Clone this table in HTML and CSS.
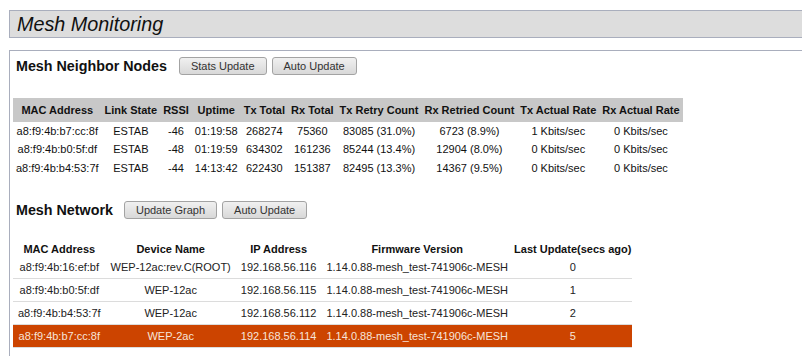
FILE: index.html
```html
<!DOCTYPE html>
<html>
<head>
<meta charset="utf-8">
<link rel="stylesheet" href="styles.css">
</head>
<body>
<div class="titlebar"><h1 class="title">Mesh Monitoring</h1></div>
<div class="panel">
  <div class="section-head">
    <h3 class="section-title">Mesh Neighbor Nodes</h3>
    <div class="btns">
      <button class="btn">Stats Update</button>
      <button class="btn">Auto Update</button>
    </div>
  </div>
  <table class="neighbors">
    <thead>
      <tr><th>MAC Address</th><th>Link State</th><th>RSSI</th><th>Uptime</th><th>Tx Total</th><th>Rx Total</th><th>Tx Retry Count</th><th>Rx Retried Count</th><th>Tx Actual Rate</th><th>Rx Actual Rate</th></tr>
    </thead>
    <tbody>
      <tr><td>a8:f9:4b:b7:cc:8f</td><td>ESTAB</td><td>-46</td><td>01:19:58</td><td>268274</td><td>75360</td><td>83085 (31.0%)</td><td>6723 (8.9%)</td><td>1 Kbits/sec</td><td>0 Kbits/sec</td></tr>
      <tr><td>a8:f9:4b:b0:5f:df</td><td>ESTAB</td><td>-48</td><td>01:19:59</td><td>634302</td><td>161236</td><td>85244 (13.4%)</td><td>12904 (8.0%)</td><td>0 Kbits/sec</td><td>0 Kbits/sec</td></tr>
      <tr><td>a8:f9:4b:b4:53:7f</td><td>ESTAB</td><td>-44</td><td>14:13:42</td><td>622430</td><td>151387</td><td>82495 (13.3%)</td><td>14367 (9.5%)</td><td>0 Kbits/sec</td><td>0 Kbits/sec</td></tr>
    </tbody>
  </table>
  <div class="section-head second">
    <h3 class="section-title">Mesh Network</h3>
    <div class="btns">
      <button class="btn">Update Graph</button>
      <button class="btn">Auto Update</button>
    </div>
  </div>
  <table class="network">
    <thead>
      <tr><th>MAC Address</th><th>Device Name</th><th>IP Address</th><th>Firmware Version</th><th>Last Update(secs ago)</th></tr>
    </thead>
    <tbody>
      <tr><td>a8:f9:4b:16:ef:bf</td><td>WEP-12ac:rev.C(ROOT)</td><td>192.168.56.116</td><td>1.14.0.88-mesh_test-741906c-MESH</td><td>0</td></tr>
      <tr><td>a8:f9:4b:b0:5f:df</td><td>WEP-12ac</td><td>192.168.56.115</td><td>1.14.0.88-mesh_test-741906c-MESH</td><td>1</td></tr>
      <tr><td>a8:f9:4b:b4:53:7f</td><td>WEP-12ac</td><td>192.168.56.112</td><td>1.14.0.88-mesh_test-741906c-MESH</td><td>2</td></tr>
      <tr class="selected"><td>a8:f9:4b:b7:cc:8f</td><td>WEP-2ac</td><td>192.168.56.114</td><td>1.14.0.88-mesh_test-741906c-MESH</td><td>5</td></tr>
    </tbody>
  </table>
</div>
</body>
</html>
```

FILE: styles.css
```css
html { overflow: hidden; background: #fff; }
body {
  margin: 0;
  padding: 10px 0 0 9px;
  font-family: "Liberation Sans", Arial, sans-serif;
  font-size: 11px;
  color: #111;
}
.titlebar {
  margin-right: -30px;
  height: 26px;
  background: #dddddd;
  border: 1px solid #a9aebd;
  display: flex;
  align-items: center;
  padding-left: 7px;
}
.title {
  margin: 0;
  font-size: 19.8px;
  font-style: italic;
  font-weight: normal;
  color: #111;
  line-height: 24px;
}
.panel {
  margin-top: 12px;
  margin-right: -30px;
  border-top: 1px solid #a9aebd;
  border-left: 1px solid #a9aebd;
  padding-bottom: 20px;
}
.section-head {
  display: flex;
  align-items: center;
  padding: 6px 0 0 6px;
}
.section-head.second { padding-top: 0; margin-top: 24px; }
.section-title {
  margin: 0;
  font-size: 14.3px;
  font-weight: bold;
  color: #111;
  line-height: 18px;
}
.btns { display: flex; gap: 5px; margin-left: 12px; }
.section-head.second .btns { margin-left: 11px; }
.btn {
  height: 18px;
  padding: 0 11px;
  font-family: "Liberation Sans", Arial, sans-serif;
  font-size: 11px;
  color: #333;
  background: linear-gradient(#f0f0f0, #d8d8d8);
  border: 1px solid #a3a3a3;
  border-radius: 3px;
  line-height: 16px;
}
table { border-collapse: collapse; border-spacing: 0; margin-left: 3px; }
.neighbors { margin-top: 23px; }
.neighbors th {
  background: #c8c8c8;
  font-weight: bold;
  padding: 5.7px 3px;
  line-height: 12.6px;
  white-space: nowrap;
  color: #111;
}
.neighbors td {
  padding: 3px 3px;
  line-height: 12.5px;
  text-align: center;
  white-space: nowrap;
  color: #111;
}
.network { margin-top: 21px; color: #222; }
.network th {
  padding: 3px 1px 0;
  line-height: 13px;
  font-weight: bold;
  white-space: nowrap;
  color: #111;
}
.network td {
  padding: 4.5px 5px;
  line-height: 13px;
  text-align: center;
  white-space: nowrap;
  border-bottom: 1px solid #dcdcdc;
}
.network tr.selected td {
  background: #cc4400;
  color: #f7e4da;
}
```
